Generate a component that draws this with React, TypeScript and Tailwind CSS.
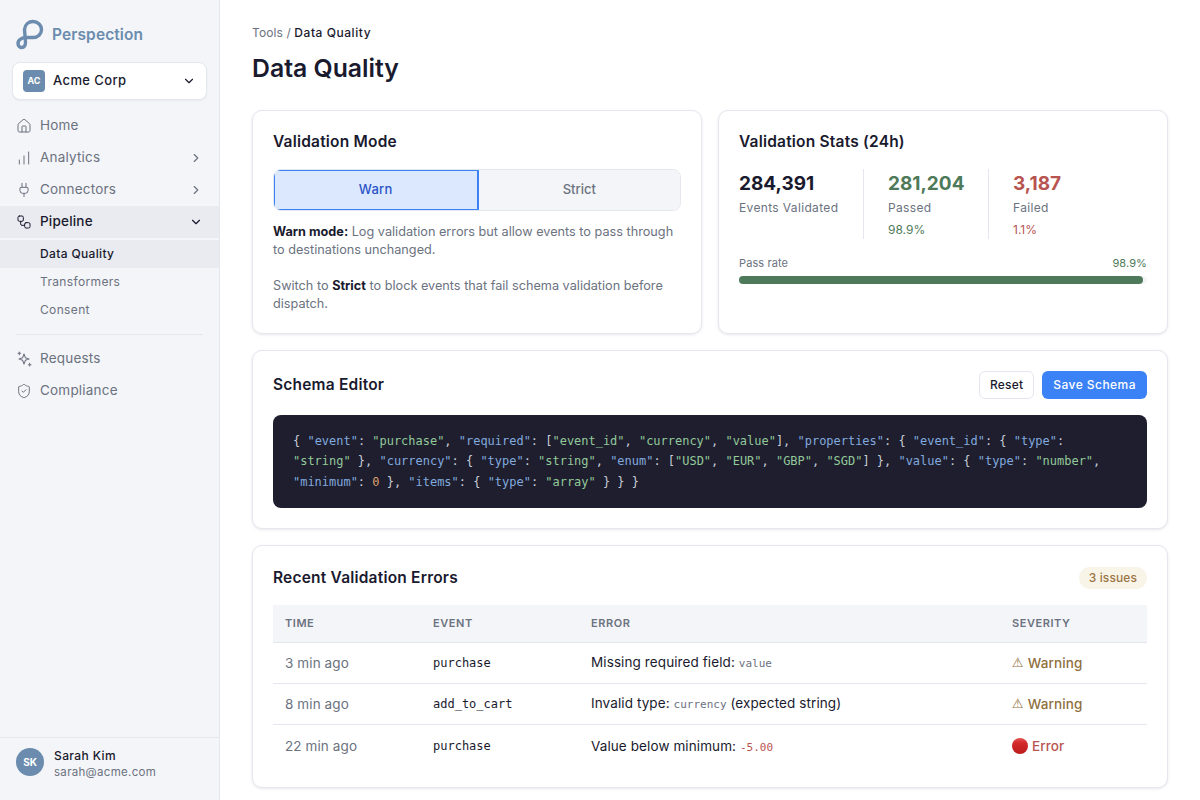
import { ReactNode } from "react";
import { ChartNoAxesColumnIncreasing, ChevronDown, ChevronRight, House, Plug, ShieldCheck, Workflow } from "lucide-react";

const errors = [
  { time: "3 min ago", event: "purchase", severity: "warn" },
  { time: "8 min ago", event: "add_to_cart", severity: "warn" },
  { time: "22 min ago", event: "purchase", severity: "error" },
];

function Card({ children, className = "" }: { children: ReactNode; className?: string }) {
  return <section className={`rounded-[10px] border border-[#e5e7ef] bg-white p-5 shadow-[0_1px_3px_rgba(26,26,46,0.1)] ${className}`}>{children}</section>;
}

function Title({ children, className = "" }: { children: ReactNode; className?: string }) {
  return <h2 className={`text-[15.5px] font-semibold tracking-[0.2px] ${className}`}>{children}</h2>;
}

function NavItem({ icon, label, open, more, active }: { icon: ReactNode; label: string; open?: boolean; more?: boolean; active?: boolean }) {
  return (
    <div className={`flex h-8 items-center gap-2 pl-4 pr-4 text-[13.5px] tracking-[0.2px] ${active ? "bg-[#e9ebf0] font-medium text-[#1a1a2e]" : "text-[#6b7280]"}`}>
      <span className="flex w-4 justify-center">{icon}</span>
      <span className="flex-1 pb-0.5">{label}</span>
      {more && <ChevronRight size={14} />}
      {open && <ChevronDown size={14} />}
    </div>
  );
}

function Stat({ value, label, sub, color, className = "" }: { value: string; label: string; sub?: string; color: string; className?: string }) {
  return (
    <div className={className}>
      <div className={`text-[19px] font-bold leading-[30px] ${color}`}>{value}</div>
      <div className="text-[12px] leading-[18px] tracking-[0.35px] text-[#6b7280]">{label}</div>
      {sub && <div className={`mt-1 text-[12px] leading-[18px] ${color}`}>{sub}</div>}
    </div>
  );
}

const K = ({ children }: { children: ReactNode }) => <span className="text-[#82aadf]">{children}</span>;
const S = ({ children }: { children: ReactNode }) => <span className="text-[#93c99a]">{children}</span>;

export default function App() {
  return (
    <div className="flex h-screen overflow-hidden bg-white font-['Inter',sans-serif] text-[#1a1a2e]">
      <aside className="flex w-[220px] shrink-0 flex-col border-r border-[#e5e7ef] bg-[#f4f5f8]">
        <div className="flex h-[62px] items-center gap-2 pl-4 pt-[6px]">
          <svg width="28" height="32" viewBox="0 0 28 32" fill="none" stroke="#6b8cae" strokeWidth="3.4" strokeLinecap="round">
            <path d="M8.5 11.5 C9 6 13 3.5 17 3.5 C22 3.5 25.5 7.5 25.5 11.5 C25.5 16 22 19.5 17 19.5 L10 19.5 C6 19.5 2 22 2 25.5 C2 28 4 29.5 5.8 29.5 C8.5 29.5 9.5 27 9.5 24 L8.5 11.5" />
          </svg>
          <span className="pt-0.5 text-[15.5px] font-semibold tracking-[0.1px] text-[#6b8cae]">Perspection</span>
        </div>
        <div className="mx-3 flex h-[38px] items-center rounded-lg border border-[#e5e7ef] bg-white pl-[10px] pr-[10px] shadow-[0_1px_2px_rgba(26,26,46,0.05)]">
          <span className="flex h-[22px] w-[22px] items-center justify-center rounded bg-[#6b8cae] text-[9px] font-bold text-white">AC</span>
          <span className="ml-2 flex-1 text-[13px] font-medium tracking-[0.4px]">Acme Corp</span>
          <ChevronDown size={14} />
        </div>
        <nav className="mt-[10px] flex-1">
          <NavItem icon={<House size={18} strokeWidth={1.5} />} label="Home" />
          <NavItem icon={<ChartNoAxesColumnIncreasing size={18} strokeWidth={1.5} />} label="Analytics" more />
          <NavItem icon={<Plug size={18} strokeWidth={1.5} />} label="Connectors" more />
          <NavItem icon={<Workflow size={18} strokeWidth={1.5} />} label="Pipeline" open active />
          <div className="mt-[2px] flex flex-col text-[12px] tracking-[0.35px]">
            <div className="flex h-7 items-center bg-[#e9ebf0] pl-10 font-medium">Data Quality</div>
            <div className="flex h-7 items-center pl-10 text-[#6b7280]">Transformers</div>
            <div className="flex h-7 items-center pl-10 text-[#6b7280]">Consent</div>
          </div>
          <div className="mx-4 mb-2 mt-[10px] border-t border-[#e5e7ef]" />
          <NavItem
            icon={
              <svg width="18" height="18" viewBox="0 0 24 24" fill="none" stroke="currentColor" strokeWidth="1.6" strokeLinecap="round" strokeLinejoin="round">
                <path d="M12 4.5 L14 10 L19.5 12 L14 14 L12 19.5 L10 14 L4.5 12 L10 10 Z" />
                <path d="M5 1.5v4M3 3.5h4M20.5 18.5v4M18.5 20.5h4" />
              </svg>
            }
            label="Requests"
          />
          <NavItem icon={<ShieldCheck size={18} strokeWidth={1.5} />} label="Compliance" />
        </nav>
        <div className="flex h-[63px] items-start gap-2 border-t border-[#e5e7ef] px-4 pt-[10px]">
          <span className="flex h-7 w-7 items-center justify-center rounded-full bg-[#6b8cae] text-[10px] font-bold text-white">SK</span>
          <div className="ml-[2px]">
            <div className="text-[12px] font-medium leading-4 tracking-[0.4px]">Sarah Kim</div>
            <div className="text-[11.5px] leading-4 tracking-[0.3px] text-[#6b7280]">sarah@acme.com</div>
          </div>
        </div>
      </aside>

      <main className="min-w-0 flex-1 px-8 pt-6">
        <div className="text-[12px] leading-[18px] tracking-[0.1px] text-[#6b7280]">
          Tools / <span className="font-medium tracking-[0.55px] text-[#1a1a2e]">Data Quality</span>
        </div>
        <h1 className="mt-2 text-[24.8px] font-semibold leading-9">Data Quality</h1>

        <div className="mt-6 grid grid-cols-2 gap-4">
          <Card className="h-[224px]">
            <Title className="leading-[22px]">Validation Mode</Title>
            <div className="mt-4 flex h-[42px] overflow-hidden rounded-lg border border-[#e5e7ef] text-[13px] font-medium">
              <div className="flex flex-1 items-center justify-center border border-r-2 border-[#3b82f6] bg-[#dbe8fd] tracking-[0.3px] text-[#2b55c8]">Warn</div>
              <div className="flex flex-1 items-center justify-center bg-[#f4f5f8] text-[#6b7280]">Strict</div>
            </div>
            <div className="mt-3 space-y-[18px] text-[12.7px] leading-[18px] text-[#6b7280]">
              <p><strong className="font-bold text-[#1a1a2e]">Warn mode:</strong> Log validation errors but allow events to pass through to destinations unchanged.</p>
              <p>Switch to <strong className="font-bold text-[#1a1a2e]">Strict</strong> to block events that fail schema validation before dispatch.</p>
            </div>
          </Card>
          <Card className="h-[224px]">
            <Title className="leading-[22px]">Validation Stats (24h)</Title>
            <div className="mt-4 flex h-[70px]">
              <Stat className="w-[125px] border-r border-[#e5e7ef]" value="284,391" label="Events Validated" color="text-[#1a1a2e]" />
              <Stat className="w-[125px] border-r border-[#e5e7ef] pl-6" value="281,204" label="Passed" sub="98.9%" color="text-[#4f7a5a]" />
              <Stat className="pl-6" value="3,187" label="Failed" sub="1.1%" color="text-[#b85450]" />
            </div>
            <div className="mt-4 flex justify-between text-[11px] leading-4 tracking-[0.1px]">
              <span className="text-[#6b7280]">Pass rate</span>
              <span className="text-[#4f7a5a]">98.9%</span>
            </div>
            <div className="mt-[5px] h-2 rounded-full bg-[#f4f5f8]">
              <div className="h-2 rounded-full bg-[#4f7a5a]" style={{ width: "98.9%" }} />
            </div>
          </Card>
        </div>

        <Card className="mt-4">
          <div className="flex items-center justify-between">
            <Title className="leading-[28px]">Schema Editor</Title>
            <div className="flex gap-2 text-[12px] font-medium">
              <button className="h-7 rounded-md border border-[#e5e7ef] bg-white px-[10px] tracking-[0.2px]">Reset</button>
              <button className="h-7 rounded-md bg-[#3b82f6] px-[11px] tracking-[0.45px] text-white">Save Schema</button>
            </div>
          </div>
          <pre className="mt-4 whitespace-pre-wrap rounded-lg bg-[#1e1e2e] px-5 py-4 font-['DejaVu_Sans_Mono',monospace] text-[11.98px] leading-[20.4px] text-[#c9ced8]">
            {"{ "}<K>"event"</K>: <S>"purchase"</S>, <K>"required"</K>: [<S>"event_id"</S>, <S>"currency"</S>, <S>"value"</S>], <K>"properties"</K>: {"{ "}<K>"event_id"</K>: {"{ "}<K>"type"</K>:{"\n"}
            <S>"string"</S>{" }, "}<K>"currency"</K>: {"{ "}<K>"type"</K>: <S>"string"</S>, <K>"enum"</K>: [<S>"USD"</S>, <S>"EUR"</S>, <S>"GBP"</S>, <S>"SGD"</S>{"] }, "}<K>"value"</K>: {"{ "}<K>"type"</K>: <S>"number"</S>,{"\n"}
            <K>"minimum"</K>: <span className="text-[#dca06c]">0</span>{" }, "}<K>"items"</K>: {"{ "}<K>"type"</K>: <S>"array"</S>{" } } }"}
          </pre>
        </Card>

        <Card className="mt-4">
          <div className="flex items-center justify-between">
            <Title className="leading-[23px]">Recent Validation Errors</Title>
            <span className="rounded-full bg-[#f9f4e8] px-[10px] text-[12px] font-medium leading-[22px] tracking-[0.1px] text-[#9b7445]">3 issues</span>
          </div>
          <table className="mt-4 w-full table-fixed border-collapse text-left text-[13.5px] tracking-[0.1px]">
            <thead>
              <tr className="h-[37px] border-b border-[#e5e7ef] bg-[#f4f5f8] text-[11px] uppercase tracking-[0.05em] text-[#6b7280]">
                <th className="w-[148px] px-3 font-semibold">Time</th>
                <th className="w-[158px] px-3 font-semibold">Event</th>
                <th className="w-[421px] px-3 font-semibold">Error</th>
                <th className="px-3 font-semibold">Severity</th>
              </tr>
            </thead>
            <tbody>
              {errors.map((row, i) => (
                <tr key={i} className={i < 2 ? "h-[41px] border-b border-[#e5e7ef]" : "h-[43px]"}>
                  <td className="px-3 text-[#6b7280]">{row.time}</td>
                  <td className="px-3 font-['DejaVu_Sans_Mono',monospace] text-[12px] tracking-normal">{row.event}</td>
                  <td className="px-3">
                    {i === 0 && <>Missing required field: <code className="font-['DejaVu_Sans_Mono',monospace] text-[11px] tracking-normal text-[#6b7280]">value</code></>}
                    {i === 1 && <>Invalid type: <code className="font-['DejaVu_Sans_Mono',monospace] text-[11px] tracking-normal text-[#6b7280]">currency</code> (expected string)</>}
                    {i === 2 && <>Value below minimum: <code className="font-['DejaVu_Sans_Mono',monospace] text-[11px] tracking-normal text-[#b85450]">-5.00</code></>}
                  </td>
                  <td className={`px-3 font-medium ${row.severity === "warn" ? "text-[#8f6f3e]" : "text-[#b85450]"}`}>
                    {row.severity === "warn" ? (
                      <span className="flex items-center gap-1">
                        <span className="font-['DejaVu_Sans',sans-serif] text-[13px] font-normal">⚠</span>
                        <span>Warning</span>
                      </span>
                    ) : (
                      <span className="flex items-center gap-1">
                        <span className="h-4 w-4 rounded-full bg-[linear-gradient(#e25555_0%,#d42a2a_30%,#bb1c1c_100%)]" />
                        <span>Error</span>
                      </span>
                    )}
                  </td>
                </tr>
              ))}
            </tbody>
          </table>
        </Card>
      </main>
    </div>
  );
}
